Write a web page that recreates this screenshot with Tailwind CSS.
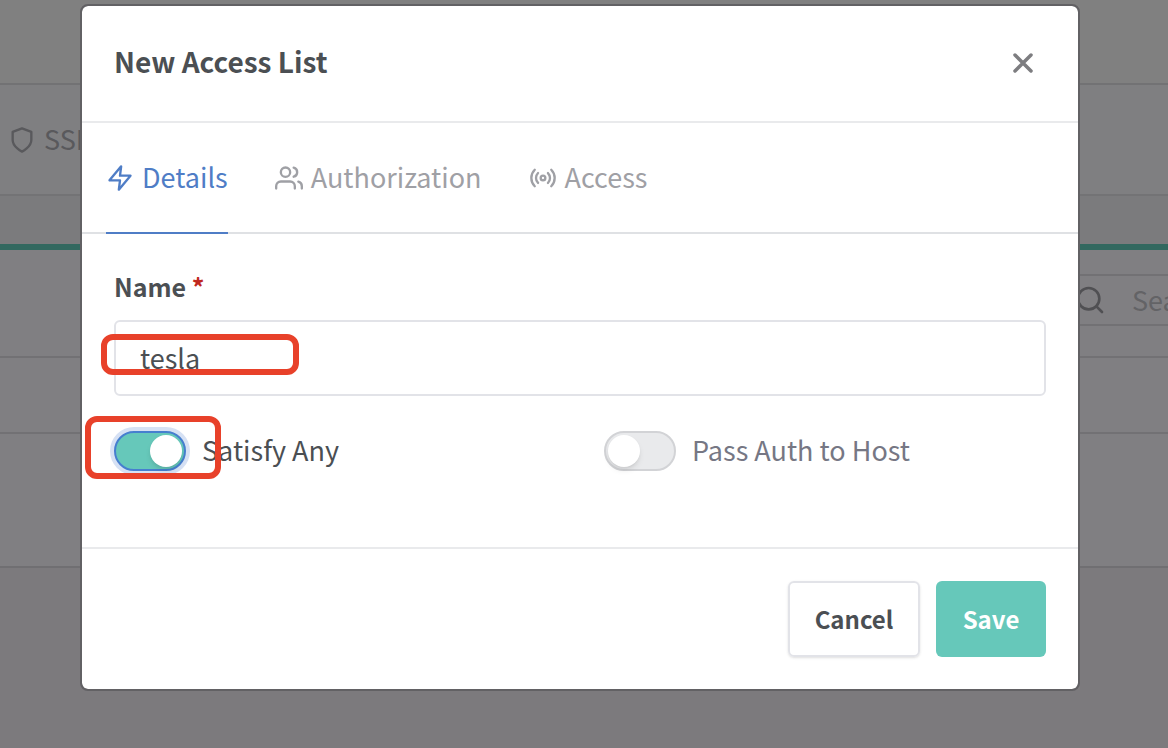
<!DOCTYPE html>
<html lang="en">
<head>
<meta charset="utf-8">
<meta name="viewport" content="width=device-width, initial-scale=1">
<title>New Access List</title>
<script src="https://cdn.jsdelivr.net/npm/@tailwindcss/browser@4"></script>
</head>
<body class="relative min-h-screen bg-[#7c7a7d] font-['Noto_Sans_CJK_SC','Noto_Sans',sans-serif] text-[27px] leading-9 text-[#4b4f53]">
<!-- Page behind the dialog -->
<div class="flex flex-col">
  <div class="h-[85px] border-b-2 border-[#727274] bg-[#808080]"></div>
  <nav class="flex h-[111px] items-center border-b-2 border-[#737375] bg-[#7f7f81] pl-2 text-[#59595c]">
    <a href="#ssl" class="flex items-center gap-2">
      <svg class="size-7" viewBox="0 0 24 24" fill="none" stroke="currentColor" stroke-width="2" stroke-linecap="round" stroke-linejoin="round"><path d="M12 22s8-4 8-10V5l-8-3-8 3v7c0 6 8 10 8 10z"/></svg>
      <span class="pb-0.5">SSL Certificates</span>
    </a>
  </nav>
  <div class="h-12 bg-[#7b7b7d]"></div>
  <main class="border-t-6 border-b-2 border-t-[#32685f] border-b-[#706f72] bg-[#807f82]">
    <div class="flex h-[108px] items-start justify-end border-b-2 border-[#727174] pt-6">
      <label class="flex h-[52px] w-60 items-center overflow-hidden border-y-2 border-[#727174] pl-[146px] text-[#505053]">
        <svg class="size-8 shrink-0" viewBox="0 0 24 24" fill="none" stroke="currentColor" stroke-width="2" stroke-linecap="round"><circle cx="11" cy="11" r="8"/><path d="M21 21l-4-4"/></svg>
        <input type="text" aria-label="Search" placeholder="Search Access…" class="ml-[26px] w-48 shrink-0 bg-transparent outline-none placeholder:text-[#636366]">
      </label>
    </div>
    <div class="h-[76px] border-b-2 border-[#727174]"></div>
    <div class="h-[132px]"></div>
  </main>
</div>

<!-- Dialog -->
<div class="absolute inset-0 pt-1 pr-[88px] pl-20">
  <form role="dialog" aria-labelledby="dialog-title" class="rounded-lg border-2 border-[#626164] bg-white bg-clip-padding">
    <header class="flex h-[117px] items-center justify-between border-b-2 border-[#e9eaec] pr-10 pb-0.5 pl-8">
      <h1 id="dialog-title" class="pb-1 text-[28px] leading-10 font-bold">New Access List</h1>
      <button type="button" aria-label="Close" class="text-[#7d7d80]">
        <svg class="size-[30px]" viewBox="0 0 30 30" fill="none" stroke="currentColor" stroke-width="3.5" stroke-linecap="round"><path d="M7 7l16 16M23 7L7 23"/></svg>
      </button>
    </header>
    <nav class="flex h-[111px] gap-[47px] border-b-2 border-[#dfe1e4] px-6 text-[#9fa0a5]">
      <a href="#details" class="-mb-0.5 flex items-center gap-2 border-b-2 border-[#4f7dc6] text-[#4f7dc6]">
        <svg class="size-7" viewBox="0 0 24 24" fill="none" stroke="currentColor" stroke-width="2" stroke-linecap="round" stroke-linejoin="round"><path d="M13 2L3 14h9l-1 8 10-12h-9l1-8z"/></svg>
        <span class="pb-0.5">Details</span>
      </a>
      <a href="#authorization" class="flex items-center gap-2">
        <svg class="size-7" viewBox="0 0 24 24" fill="none" stroke="currentColor" stroke-width="2" stroke-linecap="round" stroke-linejoin="round"><path d="M17 21v-2a4 4 0 0 0-4-4H5a4 4 0 0 0-4 4v2"/><circle cx="9" cy="7" r="4"/><path d="M23 21v-2a4 4 0 0 0-3-3.870"/><path d="M16 3.130a4 4 0 0 1 0 7.750"/></svg>
        <span class="pb-0.5">Authorization</span>
      </a>
      <a href="#access" class="flex items-center gap-2">
        <svg class="size-7" viewBox="0 0 24 24" fill="none" stroke="currentColor" stroke-width="2" stroke-linecap="round" stroke-linejoin="round"><circle cx="12" cy="12" r="2"/><path d="M16.240 7.760a6 6 0 0 1 0 8.490m-8.480-.01a6 6 0 0 1 0-8.490m11.310-2.820a10 10 0 0 1 0 14.140m-14.140 0a10 10 0 0 1 0-14.140"/></svg>
        <span class="pb-0.5">Access</span>
      </a>
    </nav>
    <div class="px-8 pt-[34px] pb-[76px]">
      <label for="name" class="block text-[25px] font-bold">Name <span class="text-[#c0281f]">*</span></label>
      <div class="relative mt-4">
        <input id="name" type="text" value="tesla" class="block h-19 w-full rounded-md border-2 border-[#e2e3e8] px-6 pb-0.5 outline-none">
        <span class="pointer-events-none absolute top-3.5 -left-[13px] h-[41px] w-[198px] rounded-xl border-6 border-[#e8412a]"></span>
      </div>
      <div class="mt-[35px] grid grid-cols-2 gap-12">
        <label class="relative flex h-10 items-center gap-4">
          <input type="checkbox" checked class="flex h-10 w-18 appearance-none items-center rounded-full border-2 border-[#d2d3d6] bg-[#e9eaec] px-0.5 before:size-8 before:rounded-full before:bg-white before:shadow-md before:content-[''] checked:justify-end checked:border-[#467fcf] checked:bg-[#66c8ba] checked:ring-4 checked:ring-[#d6e1f4]">
          <span class="pb-0.5">Satisfy Any</span>
          <span class="pointer-events-none absolute -top-[15px] -left-[29px] h-[63px] w-34 rounded-xl border-6 border-[#e8412a]"></span>
        </label>
        <label class="relative flex h-10 items-center gap-4 text-[#767784]">
          <input type="checkbox" class="flex h-10 w-18 appearance-none items-center rounded-full border-2 border-[#d2d3d6] bg-[#e9eaec] px-0.5 before:size-8 before:rounded-full before:bg-white before:shadow-md before:content-[''] checked:justify-end checked:border-[#467fcf] checked:bg-[#66c8ba]">
          <span class="pb-0.5">Pass Auth to Host</span>
        </label>
      </div>
    </div>
    <footer class="flex h-[142px] items-center justify-end gap-4 border-t-2 border-[#e9eaec] px-8 text-[24px] font-bold">
      <button type="button" class="h-19 min-w-33 rounded-md border-2 border-[#e2e3e8] px-6 shadow-sm">Cancel</button>
      <button type="submit" class="h-19 min-w-[110px] rounded-md bg-[#66c8ba] px-6 text-white">Save</button>
    </footer>
  </form>
</div>
</body>
</html>
